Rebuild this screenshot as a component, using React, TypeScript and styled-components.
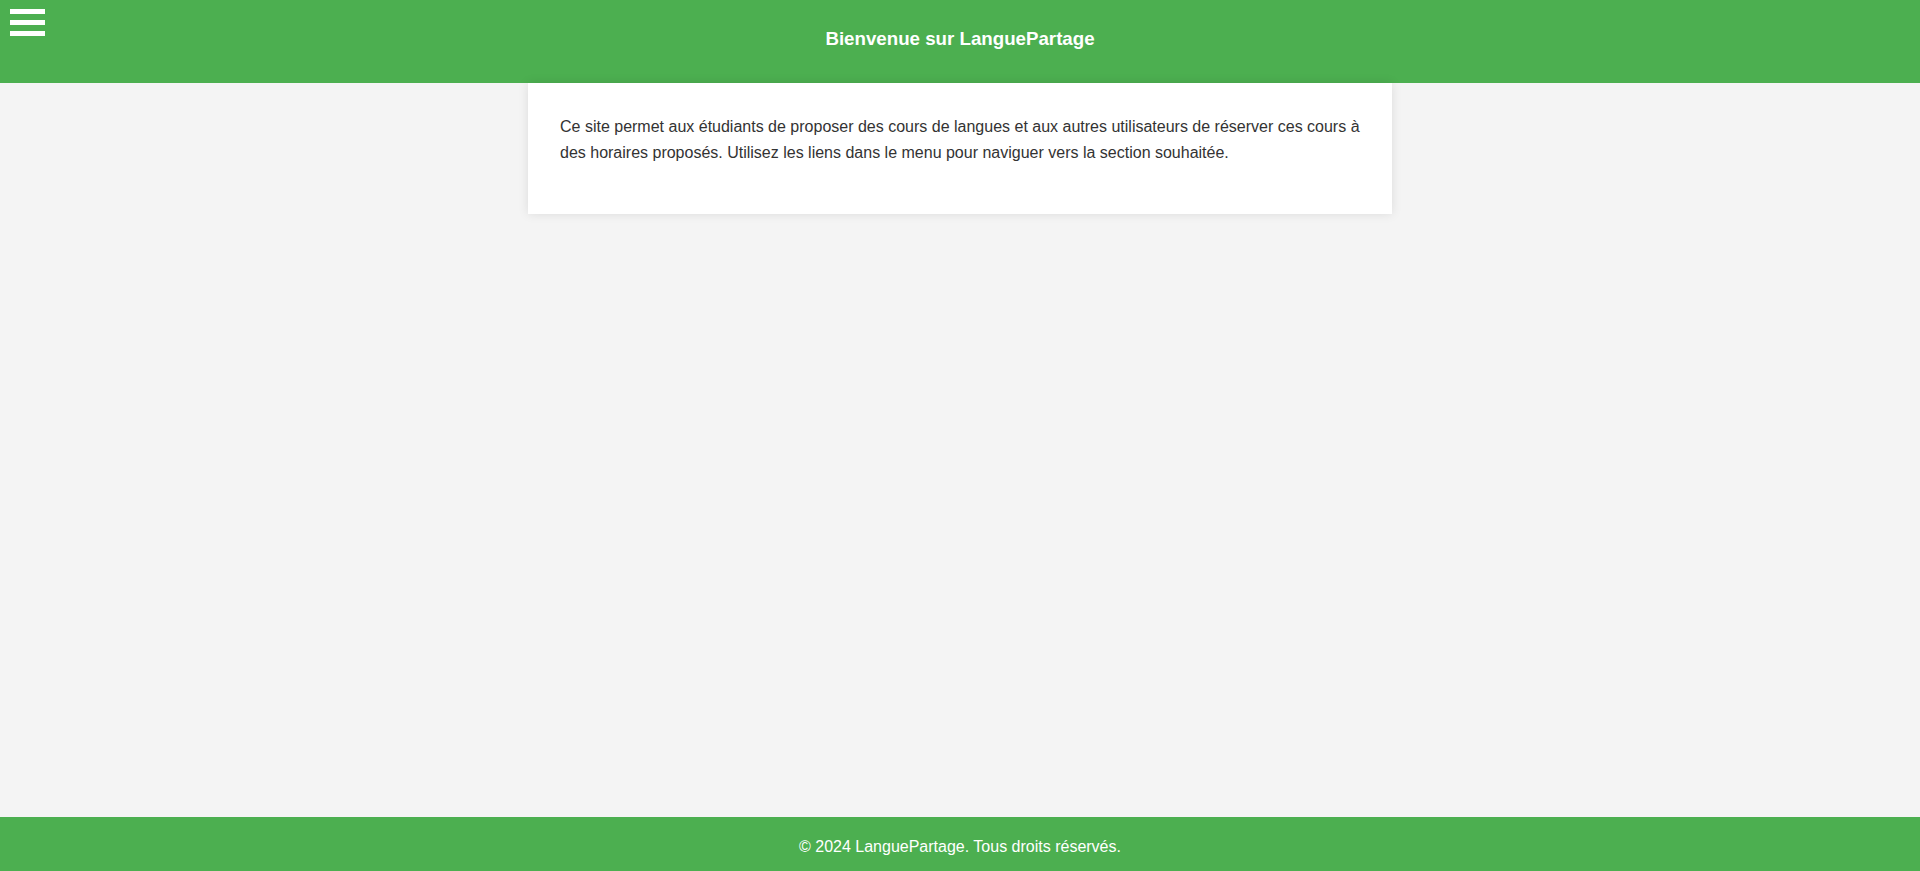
import React from "react";
import styled, { createGlobalStyle } from "styled-components";

const GlobalStyle = createGlobalStyle`
  html, body {
    margin: 0;
    padding: 0;
    background: #f4f4f4;
    font-family: "Liberation Sans", Arial, sans-serif;
    color: #333;
  }
  #root {
    min-height: 100vh;
  }
`;

const Page = styled.div`
  min-height: 100vh;
  display: flex;
  flex-direction: column;
`;

const Header = styled.header`
  box-sizing: border-box;
  height: 83px;
  background: #4caf50;
  color: #fff;
  padding: 9px 10px 0;
  display: grid;
  grid-template-columns: 1fr auto 1fr;
  align-items: start;
`;

const MenuButton = styled.button`
  justify-self: start;
  display: flex;
  flex-direction: column;
  gap: 6px;
  padding: 0;
  margin: 0;
  border: none;
  background: transparent;
  cursor: pointer;
`;

const Bar = styled.span`
  display: block;
  width: 35px;
  height: 5px;
  background: #fff;
`;

const Title = styled.h3`
  margin: 18.5px 0 0;
  font-size: 18.72px;
  line-height: 21px;
  font-weight: bold;
  text-align: center;
`;

const Main = styled.main`
  flex: 1;
  display: flex;
  justify-content: center;
  align-items: flex-start;
`;

const Card = styled.section`
  box-sizing: border-box;
  width: 864px;
  background: #fff;
  padding: 31px 32px 47px;
  box-shadow: 0 0 10px rgba(0, 0, 0, 0.1);
`;

const Text = styled.p`
  margin: 0;
  font-size: 16px;
  line-height: 26.4px;
  color: #333;
`;

const Footer = styled.footer`
  box-sizing: border-box;
  height: 54px;
  background: #4caf50;
  color: #fff;
  text-align: center;
  padding-top: 20.5px;
  font-size: 16px;
  line-height: 18.4px;
`;

export default function App() {
  return (
    <>
      <GlobalStyle />
      <Page>
        <Header>
          <MenuButton aria-label="Menu">
            <Bar />
            <Bar />
            <Bar />
          </MenuButton>
          <Title>Bienvenue sur LanguePartage</Title>
          <span />
        </Header>
        <Main>
          <Card>
            <Text>
              Ce site permet aux étudiants de proposer des cours de langues et aux autres
              utilisateurs de réserver ces cours à des horaires proposés. Utilisez les liens
              dans le menu pour naviguer vers la section souhaitée.
            </Text>
          </Card>
        </Main>
        <Footer>© 2024 LanguePartage. Tous droits réservés.</Footer>
      </Page>
    </>
  );
}
